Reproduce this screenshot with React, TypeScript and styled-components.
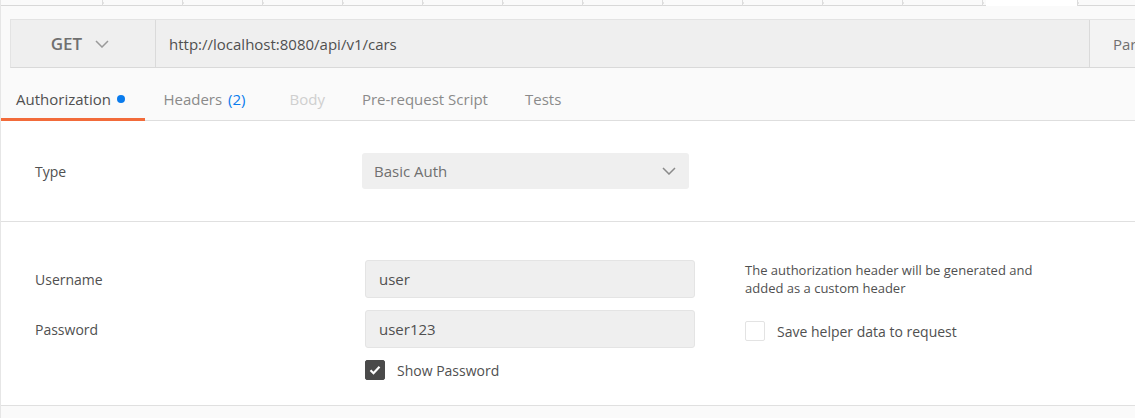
import React from "react";
import styled, { createGlobalStyle } from "styled-components";

const Global = createGlobalStyle`
  html, body { margin: 0; padding: 0; background: #ffffff; }
  body { font-family: "Open Sans", "Noto Sans", sans-serif; color: #505050; width: 1135px; height: 418px; overflow: hidden; }
`;

const Page = styled.div`
  width: 1135px;
  height: 418px;
  display: flex;
  flex-direction: column;
  border-left: 1px solid #e6e6e6;
  box-sizing: border-box;
`;

const TopArea = styled.div`
  background: #fafafa;
  display: flex;
  flex-direction: column;
`;

const TabStrip = styled.div`
  height: 5px;
  display: flex;
  border-bottom: 1px solid #d8d8d8;
  padding-left: 20px;
`;

const Stub = styled.div<{ $active?: boolean; $w: number }>`
  width: ${(p) => p.$w}px;
  height: 6px;
  box-sizing: border-box;
  border-right: 1px solid #dcdcdc;
  box-shadow: 3px 0 0 -2px #e4e4e4;
  background: ${(p) => (p.$active ? "#ffffff" : "transparent")};
  margin-bottom: ${(p) => (p.$active ? "-1px" : "0")};
  flex: none;
  margin-right: 3px;
`;

const RequestBar = styled.div`
  margin: 13px 0 0 9px;
  height: 49px;
  display: flex;
  background: #efefef;
  border-top: 1px solid #e3e3e3;
  border-bottom: 1px solid #d9d9d9;
  border-left: 1px solid #e3e3e3;
  box-sizing: border-box;
`;

const Method = styled.div`
  width: 145px;
  flex: none;
  display: flex;
  align-items: center;
  justify-content: center;
  gap: 13px;
  border-right: 1px solid #dadada;
  font-size: 17px;
  font-weight: 600;
  color: #707070;
  padding-right: 6px;
  box-sizing: border-box;
`;

const Url = styled.div`
  flex: 1;
  min-width: 0;
  display: flex;
  align-items: center;
  padding-left: 13px;
  font-size: 15px;
  color: #505050;
`;

const Params = styled.div`
  width: 46px;
  flex: none;
  box-sizing: border-box;
  border-left: 1px solid #dadada;
  background: #f3f3f3;
  display: flex;
  align-items: center;
  padding-left: 23px;
  font-size: 15px;
  color: #707070;
  overflow: hidden;
  white-space: nowrap;
`;

const Tabs = styled.div`
  height: 53px;
  display: flex;
  border-bottom: 1px solid #dedede;
  box-sizing: border-box;
`;

const Tab = styled.div<{ $active?: boolean; $disabled?: boolean }>`
  display: flex;
  align-items: center;
  gap: 6px;
  padding: 12px 18.5px 0 18.5px;
  font-size: 15px;
  color: ${(p) => (p.$active ? "#505050" : p.$disabled ? "#cfcfcf" : "#8a8a8a")};
  border-bottom: 3px solid ${(p) => (p.$active ? "#f26b3a" : "transparent")};
  margin-bottom: -1px;
  &:first-child { padding-left: 15px; padding-right: 20px; }
`;

const Count = styled.span`
  color: #097bed;
  margin-right: 7px;
`;

const Dot = styled.span`
  width: 8px;
  height: 8px;
  border-radius: 50%;
  background: #097bed;
`;

const Section = styled.div<{ $h: number }>`
  height: ${(p) => p.$h}px;
  box-sizing: border-box;
  border-bottom: 1px solid #e0e0e0;
  display: flex;
`;

const TypeRow = styled.div`
  display: flex;
  align-items: center;
  padding-left: 34px;
  width: 100%;
`;

const Label = styled.div`
  width: 327px;
  flex: none;
  font-size: 14px;
  color: #505050;
`;

const Select = styled.div`
  width: 327px;
  height: 36px;
  background: #efefef;
  border-radius: 3px;
  display: flex;
  align-items: center;
  justify-content: space-between;
  padding: 0 13px 0 12px;
  box-sizing: border-box;
  font-size: 15px;
  color: #707070;
`;

const CredGrid = styled.div`
  display: grid;
  grid-template-columns: 330px 330px 50px auto;
  grid-template-rows: 38px 38px 20px;
  row-gap: 12px;
  padding: 38px 0 0 34px;
  align-items: center;
`;

const Input = styled.div`
  height: 38px;
  box-sizing: border-box;
  background: #efefef;
  border: 1px solid #e4e4e4;
  border-radius: 3px;
  display: flex;
  align-items: center;
  padding-left: 13px;
  font-size: 15px;
  color: #505050;
`;

const CheckRow = styled.label`
  display: flex;
  align-items: center;
  gap: 12px;
  font-size: 14px;
  color: #505050;
`;

const Box = styled.span<{ $checked?: boolean }>`
  width: 20px;
  height: 20px;
  box-sizing: border-box;
  border-radius: 2px;
  background: ${(p) => (p.$checked ? "#4a4a4a" : "#ffffff")};
  border: 1px solid ${(p) => (p.$checked ? "#4a4a4a" : "#e3e3e3")};
  display: flex;
  align-items: center;
  justify-content: center;
  flex: none;
`;

const Help = styled.div`
  font-size: 13px;
  line-height: 18px;
  color: #505050;
  margin-top: 1px;
`;

const HelpCol = styled.div`
  grid-column: 4;
  grid-row: 1 / span 2;
  display: flex;
  flex-direction: column;
  gap: 24px;
  align-self: start;
`;

const Footer = styled.div`
  flex: 1;
  background: #fafafa;
`;

const Chevron = ({ color }: { color: string }) => (
  <svg width="14" height="8" viewBox="0 0 14 8" fill="none">
    <path d="M1 1l6 6 6-6" stroke={color} strokeWidth="1.5" />
  </svg>
);

const Check = () => (
  <svg width="12" height="10" viewBox="0 0 12 10" fill="none">
    <path d="M1.5 5.2l3 3 6-6.5" stroke="#ffffff" strokeWidth="2.2" />
  </svg>
);

const stubs = [80, 80, 80, 80, 80, 80, 80, 80, 80, 80, 80, 80, 95];

export default function App() {
  return (
    <>
      <Global />
      <Page>
        <TopArea>
          <TabStrip>
            {stubs.map((w, i) => (
              <Stub key={i} $w={i === 0 ? 82 : w - 3} $active={i === stubs.length - 1} />
            ))}
          </TabStrip>
          <RequestBar>
            <Method>
              GET <Chevron color="#9a9a9a" />
            </Method>
            <Url>http://localhost:8080/api/v1/cars</Url>
            <Params>Params</Params>
          </RequestBar>
          <Tabs>
            <Tab $active>
              Authorization <Dot />
            </Tab>
            <Tab>
              Headers <Count>(2)</Count>
            </Tab>
            <Tab $disabled>Body</Tab>
            <Tab>Pre-request Script</Tab>
            <Tab>Tests</Tab>
          </Tabs>
        </TopArea>
        <Section $h={101}>
          <TypeRow>
            <Label>Type</Label>
            <Select>
              Basic Auth <Chevron color="#8a8a8a" />
            </Select>
          </TypeRow>
        </Section>
        <Section $h={184}>
          <CredGrid>
            <Label>Username</Label>
            <Input>user</Input>
            <span />
            <HelpCol>
              <Help>
                The authorization header will be generated and
                <br />
                added as a custom header
              </Help>
              <CheckRow>
                <Box />
                Save helper data to request
              </CheckRow>
            </HelpCol>
            <Label>Password</Label>
            <Input>user123</Input>
            <span />
            <span />
            <CheckRow>
              <Box $checked>
                <Check />
              </Box>
              Show Password
            </CheckRow>
          </CredGrid>
        </Section>
        <Footer />
      </Page>
    </>
  );
}
